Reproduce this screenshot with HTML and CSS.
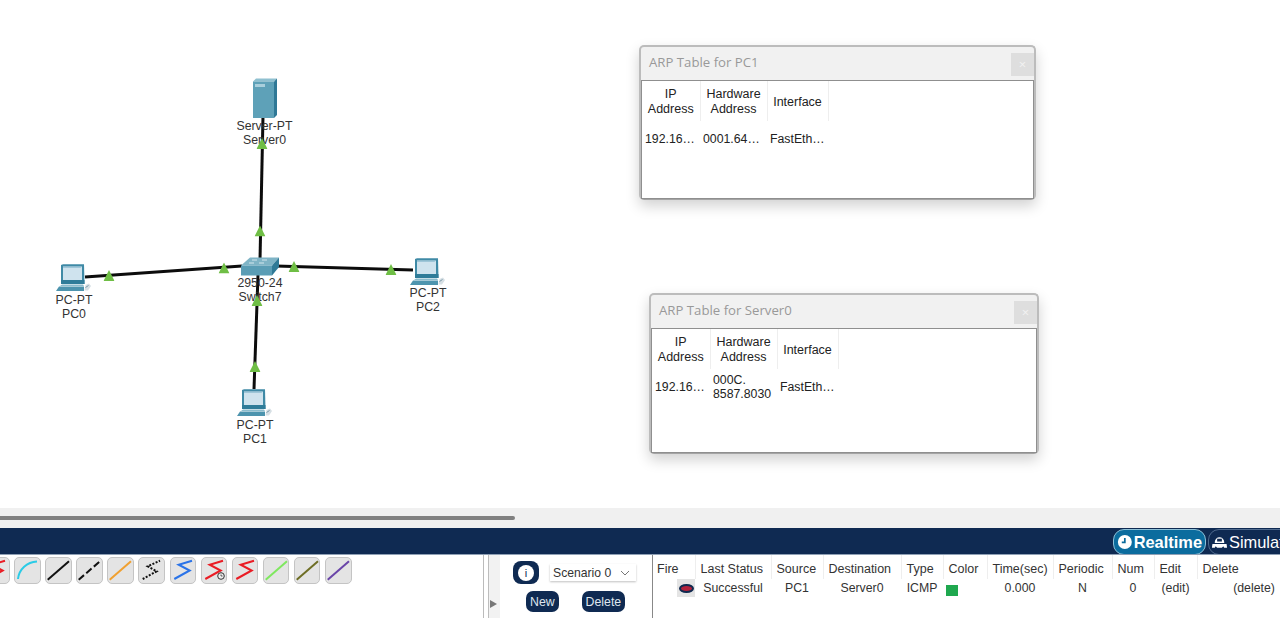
FILE: index.html
```html
<!DOCTYPE html>
<html lang="en">
<head>
<meta charset="utf-8">
<title>Packet Tracer - ARP Tables</title>
<link rel="stylesheet" href="styles.css">
</head>
<body>
<svg class="defs" width="0" height="0" aria-hidden="true">
  <defs>
    <symbol id="pc" viewBox="0 0 36 28">
      <polygon points="5,1 7,0.3 28,0.3 28.5,20 5,20" fill="#3f8aa6"/>
      <polygon points="7,2.6 26,2.600 26,16 7,16" fill="#cfe3ee"/>
      <polygon points="7,2.600 26,2.600 24.500,4 7,4" fill="#9fc6d8"/>
      <rect x="5" y="16" width="23.500" height="4" fill="#2f7c99"/>
      <polygon points="6,20.500 27,20.500 28,22 4,22" fill="#8bbccd"/>
      <polygon points="3,22.500 28,22.500 28,27 0,27" fill="#4d94ae"/>
      <polygon points="29.500,21 33,19.500 35,22 32,26.500 28.500,26.500" fill="#d6dfe4"/>
      <path d="M29.500 23.500l3-2" stroke="#7a99a8" stroke-width="1"/>
    </symbol>
    <symbol id="flow" viewBox="0 0 10 10">
      <polygon points="5,0 10,10 0,10" fill="#6fbe45"/>
    </symbol>
    <symbol id="zig" viewBox="0 0 26 27">
      <polyline points="4.300,22 19.700,13.500 8.700,7.700 22,3.700" fill="none" stroke="currentColor" stroke-width="2"/>
    </symbol>
    <symbol id="straight" viewBox="0 0 26 27">
      <line x1="2.700" y1="22.700" x2="24" y2="4.300" stroke="currentColor" stroke-width="2"/>
    </symbol>
  </defs>
</svg>

<main class="workspace">
  <svg class="links" width="1280" height="508" aria-hidden="true">
    <g stroke="#0c0c0c" stroke-width="3" fill="none">
      <line x1="263" y1="116" x2="260" y2="260"/>
      <line x1="85" y1="277" x2="242" y2="266"/>
      <line x1="276" y1="266" x2="413" y2="270"/>
      <line x1="258" y1="275" x2="254" y2="389"/>
    </g>
  </svg>

  <div class="node node-server">
    <svg class="icon" width="24" height="40" viewBox="0 0 24 40" aria-hidden="true">
      <polygon points="0,3.500 3,0.500 24,0.500 21,3.500" fill="#8fc0d0"/>
      <polygon points="21,3.500 24,0.500 24,37 21,40" fill="#2f7896"/>
      <rect x="0" y="3.500" width="21" height="36.500" fill="#5ea1b8"/>
      <rect x="2" y="6" width="10" height="3" fill="#a9cfdc"/>
    </svg>
    <span class="label">Server-PT<br>Server0</span>
  </div>
  <div class="node node-switch">
    <svg class="icon" width="40" height="19" viewBox="0 0 40 19" aria-hidden="true">
      <polygon points="1,8.500 10,0.500 39,0.500 32,8.500" fill="#7fb4c6"/>
      <polygon points="32,8.500 39,0.500 39,10 32,18.500" fill="#2f7a97"/>
      <rect x="1" y="8.500" width="31" height="10" fill="#5a9db5"/>
      <path d="M12 3h5M22 3h5M9 6h5M19 6h5" stroke="#d4e6ed" stroke-width="1"/>
    </svg>
    <span class="label">2950-24<br>Switch7</span>
  </div>
  <div class="node node-pc0">
    <svg class="icon" width="36" height="28" aria-hidden="true"><use href="#pc"/></svg>
    <span class="label">PC-PT<br>PC0</span>
  </div>
  <div class="node node-pc1">
    <svg class="icon" width="36" height="28" aria-hidden="true"><use href="#pc"/></svg>
    <span class="label">PC-PT<br>PC1</span>
  </div>
  <div class="node node-pc2">
    <svg class="icon" width="36" height="28" aria-hidden="true"><use href="#pc"/></svg>
    <span class="label">PC-PT<br>PC2</span>
  </div>

  <svg class="flows" width="1280" height="508" aria-hidden="true">
    <g class="flow-marks">
      <use href="#flow" x="256.500" y="138" width="11" height="11"/>
      <use href="#flow" x="254.500" y="225.500" width="11" height="11"/>
      <use href="#flow" x="103.500" y="270" width="11" height="11"/>
      <use href="#flow" x="218.500" y="262.500" width="11" height="11"/>
      <use href="#flow" x="288.500" y="261" width="11" height="11"/>
      <use href="#flow" x="385.500" y="264" width="11" height="11"/>
      <use href="#flow" x="251.500" y="295" width="11" height="11"/>
      <use href="#flow" x="249.500" y="361" width="11" height="11"/>
    </g>
  </svg>

  <section class="dialog dialog-pc1">
    <header class="dialog-title"><span>ARP Table for PC1</span><button class="close">×</button></header>
    <div class="dialog-body">
      <table class="arp">
        <thead><tr><th class="c-ip">IP<br>Address</th><th class="c-hw">Hardware<br>Address</th><th class="c-if">Interface</th></tr></thead>
        <tbody><tr><td>192.16…</td><td>0001.64…</td><td>FastEth…</td></tr></tbody>
      </table>
    </div>
  </section>

  <section class="dialog dialog-server">
    <header class="dialog-title"><span>ARP Table for Server0</span><button class="close">×</button></header>
    <div class="dialog-body">
      <table class="arp">
        <thead><tr><th class="c-ip">IP<br>Address</th><th class="c-hw">Hardware<br>Address</th><th class="c-if">Interface</th></tr></thead>
        <tbody><tr><td>192.16…</td><td>000C.<br>8587.8030</td><td>FastEth…</td></tr></tbody>
      </table>
    </div>
  </section>
</main>

<div class="hscroll"><div class="hthumb"></div></div>

<div class="modebar">
  <div class="mode mode-on">
    <svg width="18" height="18" viewBox="0 0 18 18" aria-hidden="true"><circle cx="9" cy="9" r="8" fill="#fff"/><path d="M9 4.500V9.500H5.500" fill="none" stroke="#0a6b9c" stroke-width="2"/></svg>
    <span>Realtime</span>
  </div>
  <div class="mode mode-off">
    <svg width="17" height="18" viewBox="0 0 18 18" aria-hidden="true"><path d="M4 9a5 5 0 0 1 10 0v1H4z" fill="#fff"/><rect x="6.500" y="5.500" width="5" height="3" fill="#0f2a52"/><path d="M1.500 11h15l.5 4h-3l-1-1.500-1.500 1.500H6.500L5 13.500 4 15H1z" fill="#fff"/></svg>
    <span>Simulation</span>
  </div>
</div>

<div class="panel">
  <div class="tools">
    <button class="tool"><svg width="26" height="27" class="c-red" aria-hidden="true"><use href="#zig"/></svg></button>
    <button class="tool"><svg width="26" height="27" aria-hidden="true"><path d="M4 22C5 12 13 5 23 4.500" fill="none" stroke="#2bcbe6" stroke-width="2"/></svg></button>
    <button class="tool"><svg width="26" height="27" class="c-black" aria-hidden="true"><use href="#straight"/></svg></button>
    <button class="tool"><svg width="26" height="27" aria-hidden="true"><line x1="2.700" y1="22.700" x2="24" y2="4.300" stroke="#111" stroke-width="2" stroke-dasharray="7 3"/></svg></button>
    <button class="tool"><svg width="26" height="27" class="c-orange" aria-hidden="true"><use href="#straight"/></svg></button>
    <button class="tool"><svg width="26" height="27" aria-hidden="true"><polyline points="4.700,22 18.700,14.300 9.700,9.300 22,3.700" fill="none" stroke="#111" stroke-width="2" stroke-dasharray="2 1.500"/></svg></button>
    <button class="tool"><svg width="26" height="27" class="c-blue" aria-hidden="true"><use href="#zig"/></svg></button>
    <button class="tool"><svg width="26" height="27" class="c-red" aria-hidden="true"><use href="#zig"/><circle cx="20" cy="19" r="3.300" fill="#eee" stroke="#333"/><path d="M20 17.500V19h1.500" fill="none" stroke="#333" stroke-width=".8"/></svg></button>
    <button class="tool"><svg width="26" height="27" class="c-red" aria-hidden="true"><use href="#zig"/></svg></button>
    <button class="tool"><svg width="26" height="27" class="c-green" aria-hidden="true"><use href="#straight"/></svg></button>
    <button class="tool"><svg width="26" height="27" class="c-olive" aria-hidden="true"><use href="#straight"/></svg></button>
    <button class="tool"><svg width="26" height="27" class="c-purple" aria-hidden="true"><use href="#straight"/></svg></button>
  </div>
  <div class="handle"><span class="handle-arrow"></span></div>
  <div class="scenario">
    <div class="scenario-top">
      <button class="info"><span>i</span></button>
      <div class="select"><span>Scenario 0</span>
        <svg width="10" height="6" viewBox="0 0 10 6" aria-hidden="true"><path d="M1 1l4 4 4-4" fill="none" stroke="#777"/></svg>
      </div>
    </div>
    <div class="scenario-actions">
      <button class="pill">New</button>
      <button class="pill">Delete</button>
    </div>
  </div>
  <div class="pdu-wrap">
    <table class="pdu">
      <colgroup>
        <col class="w-fire"><col class="w-status"><col class="w-source"><col class="w-dest"><col class="w-type"><col class="w-color"><col class="w-time"><col class="w-per"><col class="w-num"><col class="w-edit"><col class="w-del">
      </colgroup>
      <thead>
        <tr><th>Fire</th><th>Last Status</th><th>Source</th><th>Destination</th><th>Type</th><th>Color</th><th>Time(sec)</th><th>Periodic</th><th>Num</th><th>Edit</th><th>Delete</th></tr>
      </thead>
      <tbody>
        <tr>
          <td class="fire"><span class="fire-btn"><span class="fire-dot"></span></span></td>
          <td>Successful</td><td>PC1</td><td>Server0</td><td>ICMP</td>
          <td class="swatch-cell"><span class="swatch"></span></td>
          <td>0.000</td><td>N</td><td>0</td><td>(edit)</td><td>(delete)</td>
        </tr>
      </tbody>
    </table>
  </div>
</div>
</body>
</html>
```
FILE: styles.css
```css
* { box-sizing: border-box; }
html, body { margin: 0; padding: 0; }
body {
  width: 1280px;
  height: 618px;
  overflow: hidden;
  background: #fff;
  font-family: "Liberation Sans", Arial, sans-serif;
  font-size: 12.5px;
  color: #222;
}
button { font: inherit; border: 0; padding: 0; }
.defs { position: absolute; }

/* Canvas */
.workspace { position: relative; height: 508px; overflow: hidden; background: #fff; }
.links, .flows { position: absolute; left: 0; top: 0; }
.flows { pointer-events: none; }
.node {
  position: absolute;
  width: 80px;
  display: flex;
  flex-direction: column;
  align-items: center;
}
.icon { display: block; flex: none; }
.label { text-align: center; line-height: 14px; font-size: 12.3px; color: #333; display: block; }
.node-server { left: 224.5px; top: 78px; }
.node-server .label { margin-top: 1px; }
.node-switch { left: 220px; top: 257px; }
.node-switch .label { margin-top: 0; }
.node-pc0 { left: 34px; top: 264px; }
.node-pc0 .label { margin-top: 1px; }
.node-pc1 { left: 215px; top: 389px; }
.node-pc1 .label { margin-top: 1px; }
.node-pc2 { left: 388px; top: 258px; }
.node-pc2 .label { margin-top: 0; }

/* Dialogs */
.dialog {
  position: absolute;
  display: flex;
  flex-direction: column;
  background: #f1f1f1;
  border: 2px solid #bcbcbc;
  border-bottom: 1px solid #a4a4a4;
  border-radius: 5px;
  box-shadow: 0 6px 14px rgba(0, 0, 0, 0.18);
}
.dialog-pc1 { left: 639px; top: 45px; width: 397px; height: 155px; }
.dialog-server { left: 649px; top: 293px; width: 390px; height: 161px; }
.dialog-title {
  flex: none;
  height: 33px;
  display: flex;
  align-items: flex-start;
  justify-content: space-between;
  padding: 6px 0 0 8px;
  font-family: "Open Sans", sans-serif;
  font-size: 13.2px;
  color: #999;
}
.close {
  width: 23px;
  height: 23px;
  background: #dedede;
  color: #f2f2f2;
  font-size: 13px;
  line-height: 23px;
  text-align: center;
}
.dialog-body {
  flex: 1;
  background: #fff;
  border: 1px solid #8f8f8f;
}
.arp { border-collapse: collapse; table-layout: fixed; width: 186px; }
.arp th {
  height: 40px;
  padding: 2px 0 0;
  font-weight: normal;
  line-height: 15px;
  border-right: 1px solid #eee;
  color: #222;
}
.arp td {
  height: 34px;
  padding: 2px 0 0 3px;
  text-align: left;
  font-size: 12.3px;
  line-height: 14px;
  white-space: nowrap;
}
.c-ip { width: 58px; }
.c-hw { width: 67px; }
.c-if { width: 61px; }

/* Horizontal scrollbar */
.hscroll { height: 20px; padding-top: 8px; background: #f0f0f0; }
.hthumb { width: 515px; height: 4px; background: #808080; border-radius: 0 2px 2px 0; }

/* Mode bar */
.modebar {
  height: 27px;
  background: #0f2a52;
  border-bottom: 1px solid #8fa0b5;
  display: flex;
  justify-content: flex-start;
  gap: 2px;
  padding: 1px 0 0 1113px;
  overflow: hidden;
  font-size: 16.4px;
  color: #fff;
}
.mode {
  flex: none;
  height: 26px;
  display: flex;
  align-items: center;
  gap: 1px;
  border-radius: 11px;
  padding: 0 3px;
}
.mode-on { width: 93px; background: #0b6c9e; border: 1px solid #8ec1d8; font-weight: bold; }
.mode-off { border: 1px solid #4f6a8e; white-space: nowrap; padding: 0 2px; gap: 1px; }

/* Bottom panel */
.panel { height: 63px; display: flex; background: #fff; overflow: hidden; }
.tools {
  flex: none;
  width: 484px;
  display: flex;
  align-items: flex-start;
  gap: 4.6px;
  padding-top: 2px;
  overflow: hidden;
  border-right: 1px solid #bbb;
}
.tool {
  flex: none;
  width: 26.5px;
  height: 27px;
  background: #e4e4e4;
  border: 1px solid #c4c4c4;
  border-radius: 5px;
  display: block;
}
.tool:first-child { margin-left: -17px; }
.tool svg { display: block; margin: -1px 0 0 -1px; }
.c-red { color: #ea1c24; }
.c-blue { color: #2a73e8; }
.c-black { color: #111; }
.c-orange { color: #f0a030; }
.c-green { color: #7fe85f; }
.c-olive { color: #6e6e25; }
.c-purple { color: #6a45a8; }
.handle {
  flex: none;
  width: 12px;
  margin-left: 4px;
  background: #f2f2f2;
  border-left: 1px solid #bdbdbd;
  display: flex;
  align-items: flex-end;
  padding: 0 0 10px 1px;
}
.handle-arrow {
  width: 0;
  height: 0;
  border-left: 7px solid #777;
  border-top: 4.5px solid transparent;
  border-bottom: 4.5px solid transparent;
}
.scenario { flex: none; width: 152px; padding: 6px 0 0 13px; }
.scenario-top { display: flex; align-items: center; gap: 11px; }
.info {
  width: 26px;
  height: 23px;
  border-radius: 8px;
  background: #0f2a52;
  display: flex;
  align-items: center;
  justify-content: center;
}
.info span {
  width: 16px;
  height: 16px;
  border-radius: 50%;
  background: #fff;
  color: #0f2a52;
  font-size: 11px;
  line-height: 16px;
  text-align: center;
  display: block;
}
.select {
  width: 86px;
  height: 17px;
  display: flex;
  align-items: center;
  justify-content: space-between;
  padding: 1px 6px 0 3px;
  background: #fff;
  box-shadow: 0 1px 2px rgba(0, 0, 0, 0.25);
  color: #333;
  font-size: 12.2px;
}
.scenario-actions { display: flex; gap: 23px; padding: 7px 0 0 13px; }
.pill {
  height: 21px;
  padding: 0 4px;
  background: #0f2a52;
  color: #dfe6ee;
  border-radius: 7px;
  font-size: 12.3px;
}
.pdu-wrap { flex: none; width: 628px; overflow: hidden; border-left: 1px solid #888; }
.pdu { border-collapse: collapse; table-layout: fixed; width: 658px; }
.w-fire { width: 42px; }
.w-status { width: 76px; }
.w-source { width: 52px; }
.w-dest { width: 78px; }
.w-type { width: 42px; }
.w-color { width: 44px; }
.w-time { width: 66px; }
.w-per { width: 59px; }
.w-num { width: 42px; }
.w-edit { width: 43px; }
.w-del { width: 114px; }
.pdu th {
  height: 24px;
  padding: 4px 0 0 5px;
  font-weight: normal;
  text-align: left;
  border-right: 1px solid #eee;
  color: #333;
  white-space: nowrap;
}
.pdu th:first-child { padding-left: 4px; }
.pdu th:last-child { border-right: 0; }
.pdu td { height: 18px; padding: 0; text-align: center; color: #333; font-size: 12.3px; white-space: nowrap; }
.pdu td.fire { text-align: right; vertical-align: top; }
.fire-btn {
  display: inline-flex;
  align-items: center;
  justify-content: center;
  width: 18px;
  height: 18px;
  background: #e4e4e4;
  vertical-align: top;
}
.fire-dot {
  width: 15px;
  height: 9px;
  border-radius: 50%;
  background: #b3213c;
  border: 2.5px solid #10294f;
  display: block;
}
.pdu td.swatch-cell { text-align: left; padding-left: 3px; }
.swatch { display: block; width: 12px; height: 11px; margin-top: 4px; background: #1fa84f; }
```
